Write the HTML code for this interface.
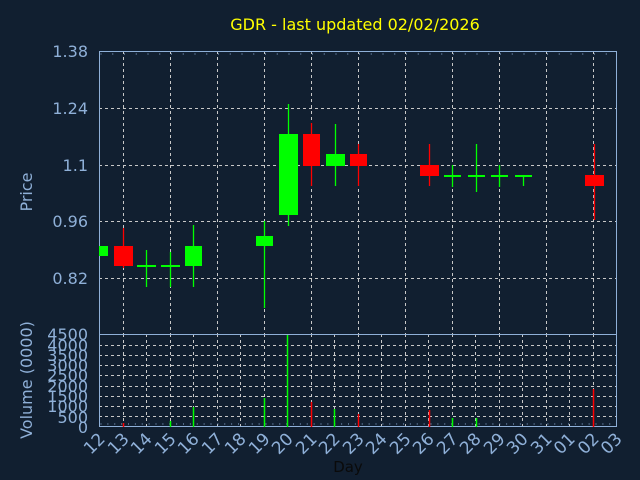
<!DOCTYPE html>
<html><head><meta charset="utf-8"><style>
html,body{margin:0;padding:0;background:#111f30;}
svg{display:block;font-family:"DejaVu Sans","Liberation Sans",sans-serif;}
</style></head><body>
<svg width="640" height="480" viewBox="0 0 640 480">
<rect width="640" height="480" fill="#111f30"/>
<text x="355" y="30" fill="#ffff00" font-size="16" text-anchor="middle">GDR - last updated 02/02/2026</text>
<g stroke="#c8c8c8" stroke-width="1" stroke-dasharray="3,3">
<line x1="99" y1="108.5" x2="617" y2="108.5"/><line x1="99" y1="165.5" x2="617" y2="165.5"/>
<line x1="99" y1="221.5" x2="617" y2="221.5"/><line x1="99" y1="278.5" x2="617" y2="278.5"/>
<line x1="123.5" y1="51" x2="123.5" y2="334"/><line x1="170.5" y1="51" x2="170.5" y2="334"/>
<line x1="217.5" y1="51" x2="217.5" y2="334"/><line x1="264.5" y1="51" x2="264.5" y2="334"/>
<line x1="311.5" y1="51" x2="311.5" y2="334"/><line x1="358.5" y1="51" x2="358.5" y2="334"/>
<line x1="405.5" y1="51" x2="405.5" y2="334"/><line x1="452.5" y1="51" x2="452.5" y2="334"/>
<line x1="499.5" y1="51" x2="499.5" y2="334"/><line x1="546.5" y1="51" x2="546.5" y2="334"/>
<line x1="593.5" y1="51" x2="593.5" y2="334"/>
</g>
<g stroke="#c8c8c8" stroke-width="1" stroke-dasharray="3,3">
<line x1="99" y1="406.5" x2="617" y2="406.5"/><line x1="99" y1="396.5" x2="617" y2="396.5"/>
<line x1="99" y1="386.5" x2="617" y2="386.5"/><line x1="99" y1="375.5" x2="617" y2="375.5"/>
<line x1="99" y1="365.5" x2="617" y2="365.5"/><line x1="99" y1="355.5" x2="617" y2="355.5"/>
<line x1="99" y1="345.5" x2="617" y2="345.5"/><line x1="99" y1="416.5" x2="617" y2="416.5"/>
<line x1="123.5" y1="334" x2="123.5" y2="427"/><line x1="146.5" y1="334" x2="146.5" y2="427"/>
<line x1="170.5" y1="334" x2="170.5" y2="427"/><line x1="193.5" y1="334" x2="193.5" y2="427"/>
<line x1="217.5" y1="334" x2="217.5" y2="427"/><line x1="240.5" y1="334" x2="240.5" y2="427"/>
<line x1="264.5" y1="334" x2="264.5" y2="427"/><line x1="287.5" y1="334" x2="287.5" y2="427"/>
<line x1="311.5" y1="334" x2="311.5" y2="427"/><line x1="334.5" y1="334" x2="334.5" y2="427"/>
<line x1="358.5" y1="334" x2="358.5" y2="427"/><line x1="381.5" y1="334" x2="381.5" y2="427"/>
<line x1="405.5" y1="334" x2="405.5" y2="427"/><line x1="428.5" y1="334" x2="428.5" y2="427"/>
<line x1="452.5" y1="334" x2="452.5" y2="427"/><line x1="475.5" y1="334" x2="475.5" y2="427"/>
<line x1="499.5" y1="334" x2="499.5" y2="427"/><line x1="522.5" y1="334" x2="522.5" y2="427"/>
<line x1="546.5" y1="334" x2="546.5" y2="427"/><line x1="569.5" y1="334" x2="569.5" y2="427"/>
<line x1="593.5" y1="334" x2="593.5" y2="427"/>
</g>
<g stroke="#8fb0d8" stroke-width="1" fill="none">
<rect x="99.5" y="51.5" width="517" height="375"/>
<line x1="99" y1="334.5" x2="617" y2="334.5"/>
</g>
<g stroke="#8fb0d8" stroke-width="1">
<line x1="99.5" y1="54" x2="617" y2="54" stroke-dasharray="1,10.75" stroke-dashoffset="-1"/>
<line x1="99.5" y1="424" x2="617" y2="424" stroke-dasharray="1,5.875" stroke-dashoffset="-1"/>
</g>
<g stroke-width="1.3">
<line x1="123.5" y1="228" x2="123.5" y2="268" stroke="#ff0000"/>
<rect x="114" y="246" width="19" height="20" fill="#ff0000"/>
<rect x="99" y="246" width="9" height="10" fill="#00ff00"/>
<line x1="146.5" y1="250" x2="146.5" y2="287" stroke="#00ff00"/>
<rect x="137" y="265" width="19" height="2" fill="#00ff00"/>
<line x1="170.5" y1="252" x2="170.5" y2="287" stroke="#00ff00"/>
<rect x="161" y="265" width="19" height="2" fill="#00ff00"/>
<line x1="193.5" y1="225" x2="193.5" y2="287" stroke="#00ff00"/>
<rect x="185" y="246" width="17" height="20" fill="#00ff00"/>
<line x1="264.5" y1="221" x2="264.5" y2="308" stroke="#00ff00"/>
<rect x="256" y="236" width="17" height="10" fill="#00ff00"/>
<line x1="288.5" y1="104" x2="288.5" y2="226" stroke="#00ff00"/>
<rect x="279" y="134" width="19" height="81" fill="#00ff00"/>
<line x1="311.5" y1="123" x2="311.5" y2="186" stroke="#ff0000"/>
<rect x="303" y="134" width="17" height="32" fill="#ff0000"/>
<line x1="335.5" y1="124" x2="335.5" y2="186" stroke="#00ff00"/>
<rect x="326" y="154" width="19" height="12" fill="#00ff00"/>
<line x1="358.5" y1="144" x2="358.5" y2="186" stroke="#ff0000"/>
<rect x="350" y="154" width="17" height="12" fill="#ff0000"/>
<line x1="429.5" y1="144" x2="429.5" y2="186" stroke="#ff0000"/>
<rect x="420" y="165" width="19" height="11" fill="#ff0000"/>
<line x1="452.5" y1="165" x2="452.5" y2="187" stroke="#00ff00"/>
<rect x="444" y="175" width="17" height="2" fill="#00ff00"/>
<line x1="476.5" y1="144" x2="476.5" y2="192" stroke="#00ff00"/>
<rect x="468" y="175" width="17" height="2" fill="#00ff00"/>
<line x1="499.5" y1="165" x2="499.5" y2="187" stroke="#00ff00"/>
<rect x="491" y="175" width="17" height="2" fill="#00ff00"/>
<line x1="523.5" y1="176" x2="523.5" y2="186" stroke="#00ff00"/>
<rect x="515" y="175" width="17" height="2" fill="#00ff00"/>
<line x1="594.5" y1="144" x2="594.5" y2="220" stroke="#ff0000"/>
<rect x="585" y="175" width="19" height="11" fill="#ff0000"/>
</g>
<g stroke-width="1.5">
<line x1="123.5" y1="423" x2="123.5" y2="427" stroke="#ff0000"/>
<line x1="170.5" y1="421" x2="170.5" y2="427" stroke="#00ff00"/>
<line x1="193.5" y1="407" x2="193.5" y2="427" stroke="#00ff00"/>
<line x1="264.5" y1="398" x2="264.5" y2="427" stroke="#00ff00"/>
<line x1="287.5" y1="335" x2="287.5" y2="427" stroke="#00ff00"/>
<line x1="311.5" y1="402" x2="311.5" y2="427" stroke="#ff0000"/>
<line x1="334.5" y1="409" x2="334.5" y2="427" stroke="#00ff00"/>
<line x1="358.5" y1="414" x2="358.5" y2="427" stroke="#ff0000"/>
<line x1="429.5" y1="410" x2="429.5" y2="427" stroke="#ff0000"/>
<line x1="452.5" y1="418" x2="452.5" y2="427" stroke="#00ff00"/>
<line x1="476.5" y1="418" x2="476.5" y2="427" stroke="#00ff00"/>
<line x1="593.5" y1="389" x2="593.5" y2="427" stroke="#ff0000"/>
</g>
<g fill="#8fb0d8" font-size="16" text-anchor="end">
<text x="88" y="57">1.38</text><text x="88" y="114">1.24</text>
<text x="88" y="171">1.1</text><text x="88" y="227">0.96</text><text x="88" y="284">0.82</text>
<text x="88" y="340">4500</text><text x="88" y="351">4000</text><text x="88" y="361">3500</text>
<text x="88" y="371">3000</text><text x="88" y="381">2500</text><text x="88" y="392">2000</text>
<text x="88" y="402">1500</text><text x="88" y="412">1000</text><text x="88" y="423">500</text>
<text x="88" y="433">0</text>
</g>
<text transform="translate(32,192) rotate(-90)" fill="#8fb0d8" font-size="16" text-anchor="middle">Price</text>
<text transform="translate(32,380) rotate(-90)" fill="#8fb0d8" font-size="16" text-anchor="middle">Volume (0000)</text>
<text x="348" y="472" font-size="15" text-anchor="middle" fill="#0a0a0a">Day</text>
<g fill="#8fb0d8" font-size="17" text-anchor="end">
<text transform="translate(106,440) rotate(-45)">12</text>
<text transform="translate(130,440) rotate(-45)">13</text>
<text transform="translate(153,440) rotate(-45)">14</text>
<text transform="translate(177,440) rotate(-45)">15</text>
<text transform="translate(200,440) rotate(-45)">16</text>
<text transform="translate(224,440) rotate(-45)">17</text>
<text transform="translate(247,440) rotate(-45)">18</text>
<text transform="translate(271,440) rotate(-45)">19</text>
<text transform="translate(294,440) rotate(-45)">20</text>
<text transform="translate(318,440) rotate(-45)">21</text>
<text transform="translate(341,440) rotate(-45)">22</text>
<text transform="translate(365,440) rotate(-45)">23</text>
<text transform="translate(388,440) rotate(-45)">24</text>
<text transform="translate(412,440) rotate(-45)">25</text>
<text transform="translate(435,440) rotate(-45)">26</text>
<text transform="translate(459,440) rotate(-45)">27</text>
<text transform="translate(482,440) rotate(-45)">28</text>
<text transform="translate(506,440) rotate(-45)">29</text>
<text transform="translate(529,440) rotate(-45)">30</text>
<text transform="translate(553,440) rotate(-45)">31</text>
<text transform="translate(576,440) rotate(-45)">01</text>
<text transform="translate(600,440) rotate(-45)">02</text>
<text transform="translate(623,440) rotate(-45)">03</text>
</g>
</svg>
</body></html>
